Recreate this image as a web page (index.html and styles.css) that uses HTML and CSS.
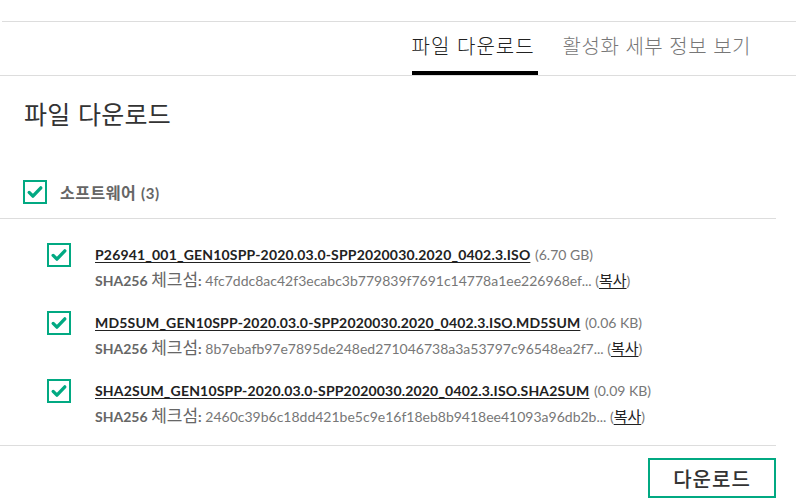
FILE: index.html
```html
<!DOCTYPE html>
<html lang="ko">
<head>
<meta charset="utf-8">
<link rel="stylesheet" href="styles.css">
</head>
<body>
<div class="page">
  <div class="topline"></div>
  <nav class="tabs">
    <div class="tab active">파일 다운로드</div>
    <div class="tab">활성화 세부 정보 보기</div>
  </nav>
  <section class="content">
    <h1 class="title">파일 다운로드</h1>
    <div class="category">
      <span class="cb"><svg viewBox="0 0 24 24" width="20" height="20"><path d="M5 12.5l4.5 4.5L19 7" fill="none" stroke="#01a982" stroke-width="4" stroke-linecap="round" stroke-linejoin="round"/></svg></span>
      <span class="cat-label">소프트웨어 <span class="count">(3)</span></span>
    </div>
    <ul class="files">
      <li class="file">
        <span class="cb"><svg viewBox="0 0 24 24" width="20" height="20"><path d="M5 12.5l4.5 4.5L19 7" fill="none" stroke="#01a982" stroke-width="4" stroke-linecap="round" stroke-linejoin="round"/></svg></span>
        <div class="info">
          <div class="name"><a>P26941_001_GEN10SPP-2020.03.0-SPP2020030.2020_0402.3.ISO</a> <span class="size">(6.70 GB)</span></div>
          <div class="hash"><b>SHA256</b> <span class="ko">체크섬</span><b>:</b> 4fc7ddc8ac42f3ecabc3b779839f7691c14778a1ee226968ef... (<a>복사</a>)</div>
        </div>
      </li>
      <li class="file">
        <span class="cb"><svg viewBox="0 0 24 24" width="20" height="20"><path d="M5 12.5l4.5 4.5L19 7" fill="none" stroke="#01a982" stroke-width="4" stroke-linecap="round" stroke-linejoin="round"/></svg></span>
        <div class="info">
          <div class="name"><a>MD5SUM_GEN10SPP-2020.03.0-SPP2020030.2020_0402.3.ISO.MD5SUM</a> <span class="size">(0.06 KB)</span></div>
          <div class="hash"><b>SHA256</b> <span class="ko">체크섬</span><b>:</b> 8b7ebafb97e7895de248ed271046738a3a53797c96548ea2f7... (<a>복사</a>)</div>
        </div>
      </li>
      <li class="file">
        <span class="cb"><svg viewBox="0 0 24 24" width="20" height="20"><path d="M5 12.5l4.5 4.5L19 7" fill="none" stroke="#01a982" stroke-width="4" stroke-linecap="round" stroke-linejoin="round"/></svg></span>
        <div class="info">
          <div class="name"><a>SHA2SUM_GEN10SPP-2020.03.0-SPP2020030.2020_0402.3.ISO.SHA2SUM</a> <span class="size">(0.09 KB)</span></div>
          <div class="hash"><b>SHA256</b> <span class="ko">체크섬</span><b>:</b> 2460c39b6c18dd421be5c9e16f18eb8b9418ee41093a96db2b... (<a>복사</a>)</div>
        </div>
      </li>
    </ul>
    <div class="footer">
      <button class="btn">다운로드</button>
    </div>
  </section>
</div>
</body>
</html>
```
FILE: styles.css
```css
* { box-sizing: border-box; }
html, body { margin: 0; padding: 0; background: #fff; }
body {
  font-family: Lato, "Noto Sans CJK KR", sans-serif;
  color: #333;
  width: 796px;
  height: 502px;
  overflow: hidden;
}
.page { padding-top: 21px; }
.topline { height: 1px; background: #ddd; margin-left: 2px; }
.tabs {
  display: flex;
  justify-content: flex-end;
  gap: 25px;
  height: 54px;
  border-bottom: 1px solid #ddd;
  padding-right: 45px;
}
.tab {
  font-family: "Noto Sans CJK KR", sans-serif;
  font-weight: 300;
  font-size: 20px;
  color: #777;
  padding-top: 10px;
  line-height: 28px;
  letter-spacing: 0.5px;
}
.tab.active {
  color: #222;
  border-bottom: 4px solid #000;
  padding-right: 3px;
  letter-spacing: 1px;
}
.content { padding-right: 20px; }
.title {
  margin: 0;
  padding: 19px 0 0 24px;
  font-family: "Noto Sans CJK KR", sans-serif;
  font-weight: 400;
  font-size: 25px;
  line-height: 36px;
  color: #333;
  letter-spacing: 0.3px;
}
.category {
  display: flex;
  align-items: center;
  gap: 13px;
  margin-top: 49px;
  padding: 0 0 14px 23px;
  border-bottom: 1px solid #ddd;
}
.cb {
  width: 24px;
  height: 24px;
  border: 2px solid #01a982;
  display: inline-flex;
  align-items: center;
  justify-content: center;
  flex: none;
}
.cat-label {
  font-family: "Noto Sans CJK KR", sans-serif;
  font-weight: 700;
  font-size: 16px;
  color: #666;
  letter-spacing: 0.5px;
}
.count { font-family: Lato, sans-serif; font-size: 15px; font-weight: 700; }
.files { list-style: none; margin: 0; padding: 0 0 0 47px; }
.file {
  display: flex;
  align-items: flex-start;
  gap: 24px;
  margin-top: 24px;
  height: 44px;
}
.file + .file { margin-top: 24px; }
.name { font-size: 14px; line-height: 24px; color: #222; }
.name a { font-weight: 700; text-decoration: underline; text-underline-offset: 2px; letter-spacing: 0.18px; }
.size { color: #777; margin-left: 1px; }
.hash { font-size: 14px; line-height: 24px; color: #777; }
.hash b { color: #666; }
.hash .ko { font-family: "Noto Sans CJK KR", sans-serif; font-size: 17px; color: #666; font-weight: 400; }
.hash a { color: #222; text-decoration: underline; text-underline-offset: 2px; font-family: "Noto Sans CJK KR", sans-serif; font-size: 15px; }
.footer {
  border-top: 1px solid #ddd;
  margin-top: 22px;
  display: flex;
  justify-content: flex-end;
  padding-top: 12px;
}
.btn {
  width: 128px;
  height: 40px;
  border: 2px solid #01a982;
  background: #fff;
  font-family: "Noto Sans CJK KR", sans-serif;
  font-weight: 500;
  font-size: 20px;
  color: #333;
  letter-spacing: 1px;
  padding: 0;
}
```
